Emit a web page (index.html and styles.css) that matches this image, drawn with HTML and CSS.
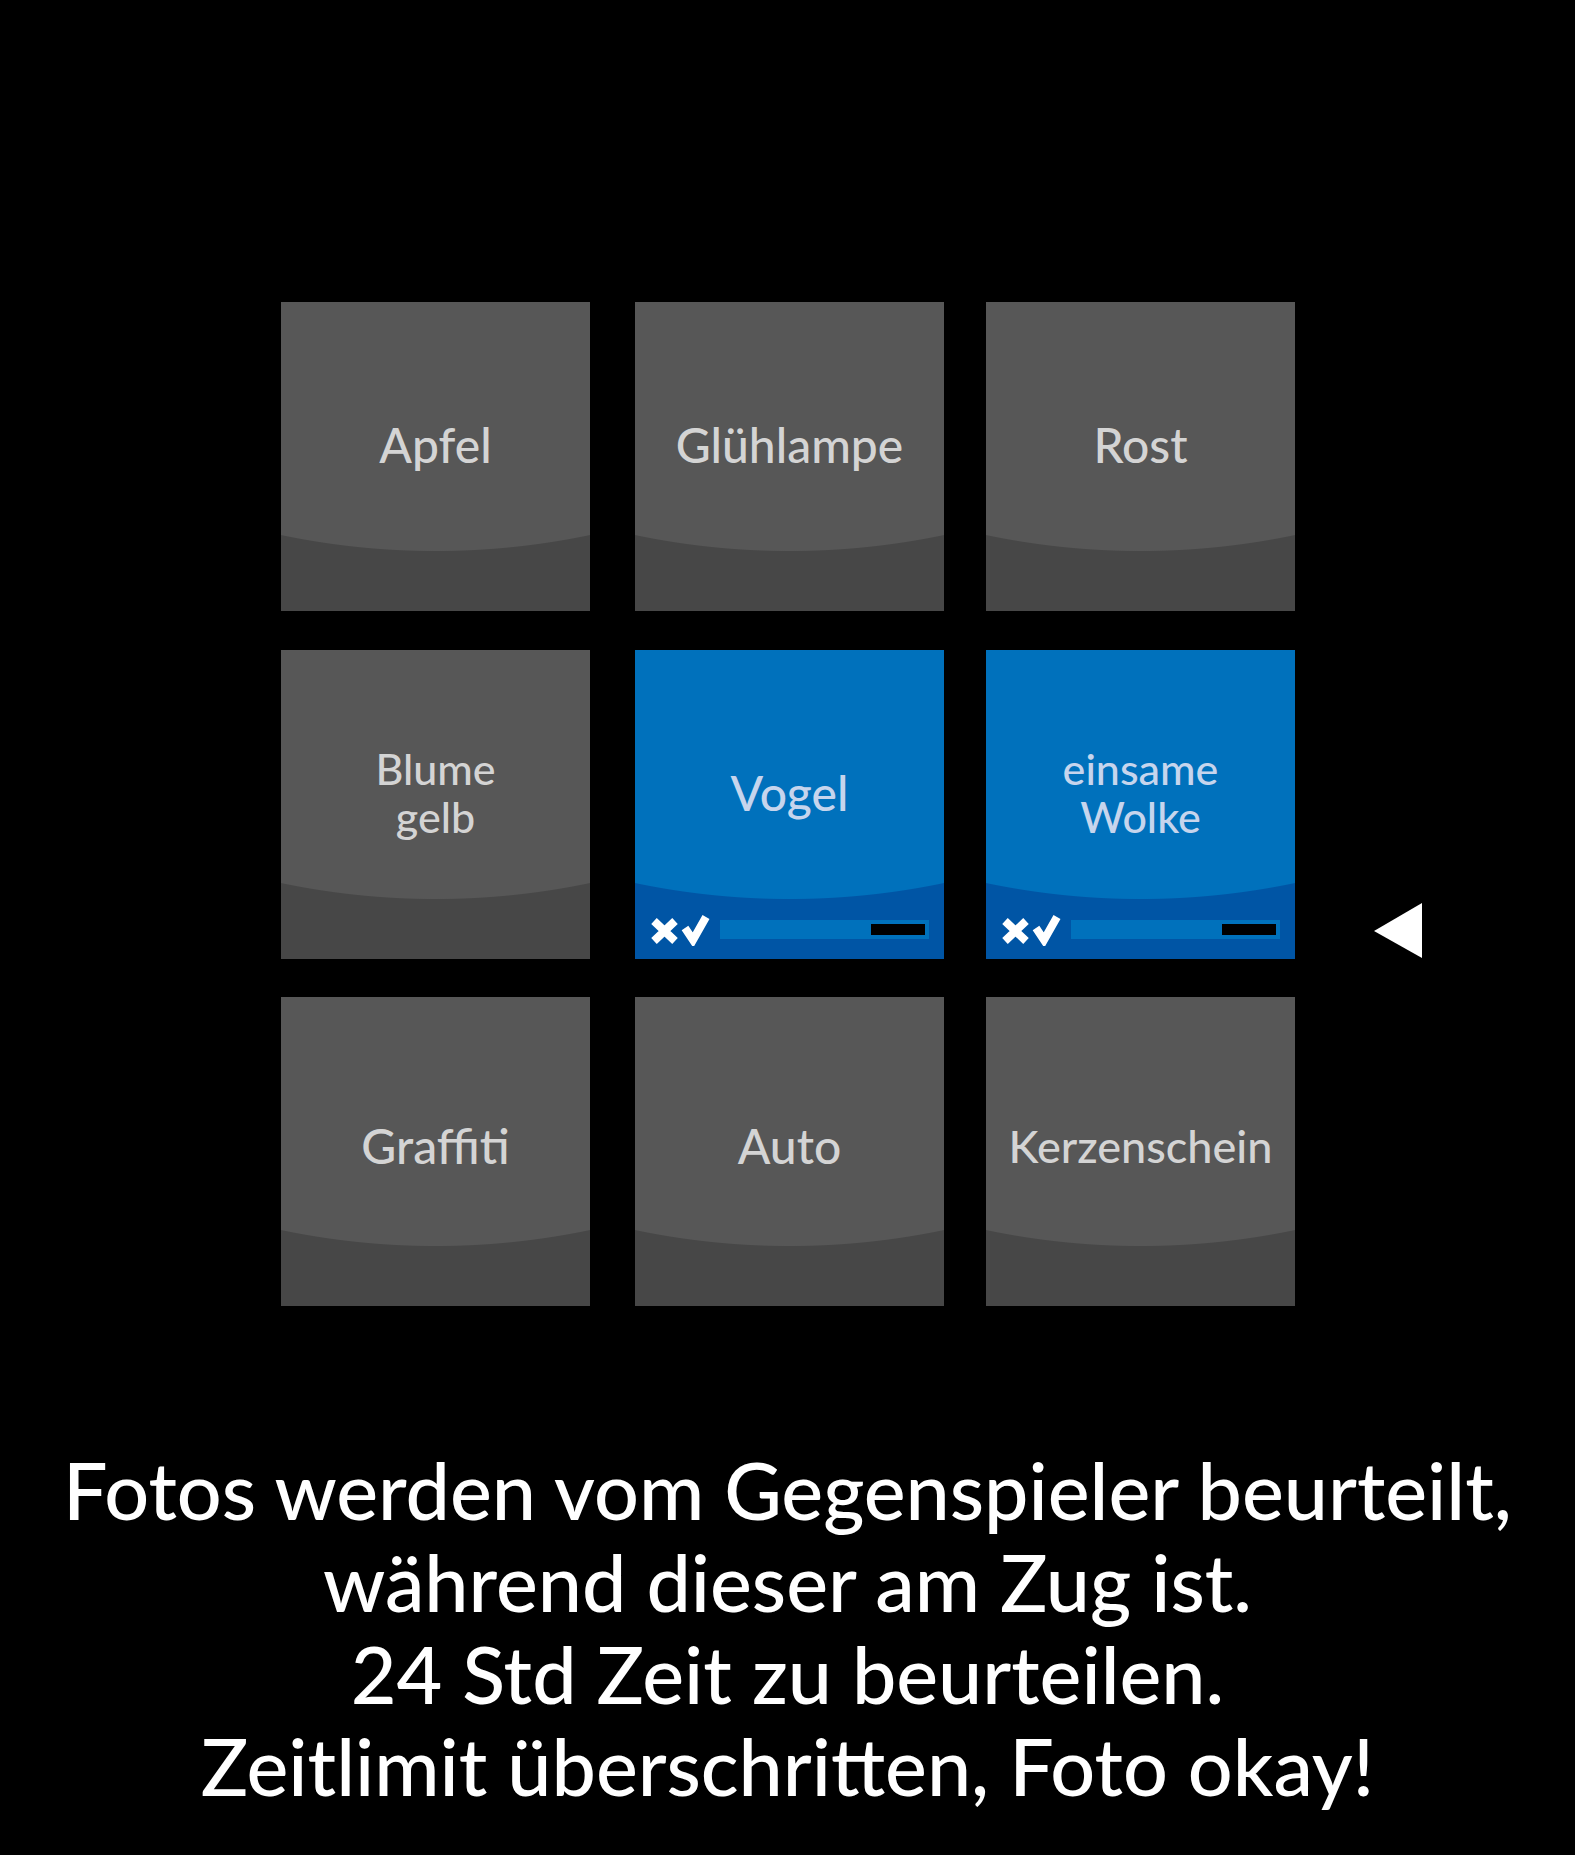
FILE: index.html
```html
<!DOCTYPE html>
<html lang="de">
<head>
<meta charset="utf-8">
<title>Fotos beurteilen</title>
<link rel="stylesheet" href="styles.css">
</head>
<body>
<main class="page">
  <div class="board">
    <div class="tile"><div class="label">Apfel</div></div>
    <div class="tile"><div class="label">Glühlampe</div></div>
    <div class="tile"><div class="label">Rost</div></div>
    <div class="spacer"></div>

    <div class="tile"><div class="label two">Blume<br>gelb</div></div>
    <div class="tile blue">
      <div class="label">Vogel</div>
      <div class="footer">
        <svg class="xv" width="64" height="34" viewBox="0 0 64 34">
          <path d="M6 9 L27 29 M27 9 L6 29" stroke="#fff" stroke-width="8" fill="none"/>
          <path d="M37 16 L45 28 L58 5" stroke="#fff" stroke-width="8" fill="none" stroke-linejoin="miter"/>
        </svg>
        <div class="bar"><div class="bar-fill"></div></div>
      </div>
    </div>
    <div class="tile blue">
      <div class="label two">einsame<br>Wolke</div>
      <div class="footer">
        <svg class="xv" width="64" height="34" viewBox="0 0 64 34">
          <path d="M6 9 L27 29 M27 9 L6 29" stroke="#fff" stroke-width="8" fill="none"/>
          <path d="M37 16 L45 28 L58 5" stroke="#fff" stroke-width="8" fill="none" stroke-linejoin="miter"/>
        </svg>
        <div class="bar"><div class="bar-fill"></div></div>
      </div>
    </div>
    <div class="marker">
      <svg width="48" height="55" viewBox="0 0 48 55"><polygon points="0,28 48,0 48,55" fill="#fff"/></svg>
    </div>

    <div class="tile"><div class="label low">Graffiti</div></div>
    <div class="tile"><div class="label low">Auto</div></div>
    <div class="tile"><div class="label low long">Kerzenschein</div></div>
    <div class="spacer"></div>
  </div>

  <p class="info">Fotos werden vom Gegenspieler beurteilt,<br>während dieser am Zug ist.<br>24 Std Zeit zu beurteilen.<br>Zeitlimit überschritten, Foto okay!</p>
</main>
</body>
</html>
```
FILE: styles.css
```css
html, body {
  margin: 0;
  padding: 0;
  background: #000;
}

.page {
  width: 1575px;
  min-height: 1855px;
  padding-top: 302px;
  box-sizing: border-box;
  font-family: "Lato", "Open Sans", sans-serif;
}

.board {
  display: grid;
  grid-template-columns: 354px 351px 388px 48px;
  grid-template-rows: 348px 347px 309px;
  margin-left: 281px;
}

.tile {
  width: 309px;
  height: 309px;
  display: flex;
  flex-direction: column;
  background: radial-gradient(circle 754px at 50% -505px, #575757 753.5px, #474747 754.5px);
  color: #d4d4d4;
}

.tile.blue {
  background: radial-gradient(circle 754px at 50% -505px, #0071bc 753.5px, #0055a5 754.5px);
  color: #c6d5ed;
}

.label {
  height: 262px;
  padding-top: 24px;
  box-sizing: border-box;
  display: flex;
  align-items: center;
  justify-content: center;
  text-align: center;
  font-size: 48px;
  font-weight: 500;
  line-height: 1;
}

.label.low {
  padding-top: 36px;
}

.label.two {
  font-size: 43px;
  line-height: 48px;
}

.label.long {
  font-size: 45px;
}

.footer {
  margin-top: auto;
  height: 34px;
  padding: 0 15px 13px 13px;
  display: flex;
  align-items: center;
}

.xv {
  display: block;
  flex: none;
}

.bar {
  margin-left: 8px;
  width: 209px;
  height: 19px;
  box-sizing: border-box;
  padding: 4px;
  background: #0071bc;
  display: flex;
  justify-content: flex-end;
}

.bar-fill {
  width: 54px;
  height: 11px;
  background: #000;
}

.marker {
  align-self: start;
  margin-top: 253px;
}

.marker svg {
  display: block;
}

.info {
  margin: 138px 0 0;
  color: #fff;
  text-align: center;
  font-size: 79px;
  font-weight: 500;
  line-height: 92px;
}
```
